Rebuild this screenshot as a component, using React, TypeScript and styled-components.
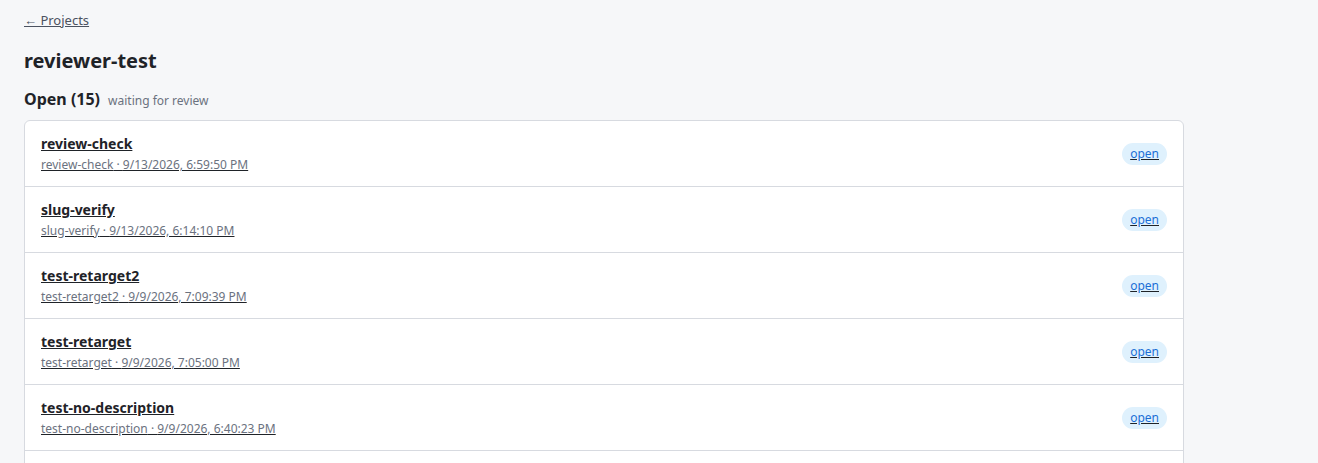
import React from "react";
import styled, { createGlobalStyle } from "styled-components";

const GlobalStyle = createGlobalStyle`
  body {
    margin: 0;
    background: #f6f7f9;
    color: #1f2328;
    font-family: "Noto Sans", "Open Sans", sans-serif;
  }
`;

const Page = styled.div`
  max-width: 1160px;
  padding: 8px 24px 24px;
`;

const BackLink = styled.a`
  display: inline-block;
  font-size: 13px;
  line-height: 18px;
  color: #4b5260;
  text-decoration: underline;
`;

const Title = styled.h1`
  margin: 17px 0 0;
  font-size: 20px;
  line-height: 27px;
  font-weight: 700;
`;

const SectionHead = styled.div`
  display: flex;
  align-items: baseline;
  gap: 8px;
  margin-top: 14px;
`;

const SectionTitle = styled.h2`
  margin: 0;
  font-size: 16px;
  line-height: 22px;
  font-weight: 700;
`;

const SectionNote = styled.span`
  font-size: 12px;
  color: #6b7280;
`;

const Card = styled.div`
  margin-top: 10px;
  background: #fff;
  border: 1px solid #d7dae0;
  border-radius: 6px;
  overflow: hidden;
`;

const Row = styled.a`
  display: flex;
  align-items: center;
  justify-content: space-between;
  padding: 12px 16px 12px;
  color: #1f2328;
  text-decoration: underline;
  & + & {
    border-top: 1px solid #d7dae0;
  }
`;

const RowText = styled.div`
  display: flex;
  flex-direction: column;
`;

const RowTitle = styled.span`
  font-size: 14px;
  line-height: 21px;
  font-weight: 700;
`;

const RowMeta = styled.span`
  margin-top: 2px;
  font-size: 12px;
  line-height: 18px;
  color: #6b7280;
`;

const Pill = styled.span`
  padding: 2px 8px;
  border-radius: 11px;
  background: #dff1fd;
  color: #1a6fd6;
  font-size: 12px;
  line-height: 18px;
`;

const items = [
  { name: "review-check", date: "9/13/2026, 6:59:50 PM" },
  { name: "slug-verify", date: "9/13/2026, 6:14:10 PM" },
  { name: "test-retarget2", date: "9/9/2026, 7:09:39 PM" },
  { name: "test-retarget", date: "9/9/2026, 7:05:00 PM" },
  { name: "test-no-description", date: "9/9/2026, 6:40:23 PM" },
  { name: "test-layout", date: "9/9/2026, 6:12:02 PM" },
];

export default function App() {
  return (
    <>
      <GlobalStyle />
      <Page>
        <BackLink href="#">← Projects</BackLink>
        <Title>reviewer-test</Title>
        <SectionHead>
          <SectionTitle>Open (15)</SectionTitle>
          <SectionNote>waiting for review</SectionNote>
        </SectionHead>
        <Card>
          {items.map((it) => (
            <Row href="#" key={it.name}>
              <RowText>
                <RowTitle>{it.name}</RowTitle>
                <RowMeta>
                  {it.name} · {it.date}
                </RowMeta>
              </RowText>
              <Pill>open</Pill>
            </Row>
          ))}
        </Card>
      </Page>
    </>
  );
}
